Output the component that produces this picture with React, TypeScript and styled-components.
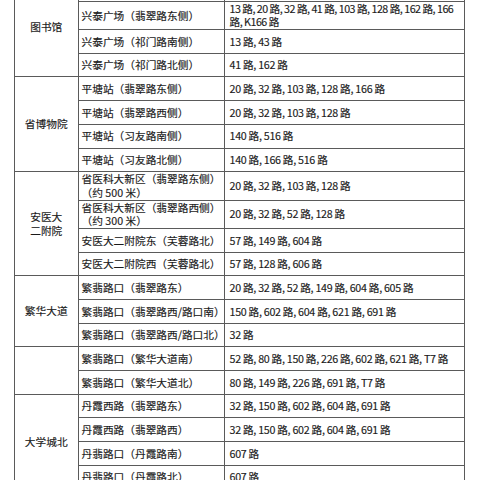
import React from 'react'
import styled, { createGlobalStyle } from 'styled-components'

const GlobalStyle = createGlobalStyle`
  body {
    margin: 0;
    background: #ffffff;
  }
`

const Page = styled.div`
  width: 480px;
  height: 480px;
  overflow: hidden;
  background: #ffffff;
`

const Sheet = styled.div`
  padding-left: 14px;
  margin-top: -23px;
`

const Table = styled.table`
  border-collapse: collapse;
  table-layout: fixed;
  width: 450px;
  font-family: "Noto Sans CJK SC", "Noto Sans", sans-serif;
  font-size: 10.7px;
  color: #1a1a1a;
  -webkit-text-stroke: 0.15px #1a1a1a;
`

const Cell = styled.td<{ $tall?: boolean }>`
  border: 1px solid #5a5a5a;
  height: ${p => (p.$tall ? '27.4px' : '22.7px')};
  padding: 0 0 0 3px;
  line-height: 13.6px;
  white-space: nowrap;
  overflow: hidden;
  vertical-align: middle;
`

const GroupCell = styled.td`
  border: 1px solid #5a5a5a;
  text-align: center;
  vertical-align: middle;
  line-height: 14px;
  padding: 0;
`

const RouteCell = styled(Cell)<{ $tight?: boolean }>`
  padding-left: 5px;
  letter-spacing: ${p => (p.$tight ? '-0.5px' : '-0.28px')};
`

interface Stop {
  name: string[]
  routes: string[]
  tight?: boolean
}

interface Group {
  label: string[]
  stops: Stop[]
}

// the first stop of 图书馆 sits above the visible area
const groups: Group[] = [
  {
    label: ['图书馆'],
    stops: [
      { name: [], routes: [] },
      {
        name: ['兴泰广场（翡翠路东侧）'],
        routes: ['13 路, 20 路, 32 路, 41 路, 103 路, 128 路, 162 路, 166', '路, K166 路'],
        tight: true,
      },
      { name: ['兴泰广场（祁门路南侧）'], routes: ['13 路, 43 路'] },
      { name: ['兴泰广场（祁门路北侧）'], routes: ['41 路, 162 路'] },
    ],
  },
  {
    label: ['省博物院'],
    stops: [
      { name: ['平塘站（翡翠路东侧）'], routes: ['20 路, 32 路, 103 路, 128 路, 166 路'] },
      { name: ['平塘站（翡翠路西侧）'], routes: ['20 路, 32 路, 103 路, 128 路'] },
      { name: ['平塘站（习友路南侧）'], routes: ['140 路, 516 路'] },
      { name: ['平塘站（习友路北侧）'], routes: ['140 路, 166 路, 516 路'] },
    ],
  },
  {
    label: ['安医大', '二附院'],
    stops: [
      { name: ['省医科大新区（翡翠路东侧）', '（约 500 米）'], routes: ['20 路, 32 路, 103 路, 128 路'] },
      { name: ['省医科大新区（翡翠路西侧）', '（约 300 米）'], routes: ['20 路, 32 路, 52 路, 128 路'] },
      { name: ['安医大二附院东（芙蓉路北）'], routes: ['57 路, 149 路, 604 路'] },
      { name: ['安医大二附院西（芙蓉路北）'], routes: ['57 路, 128 路, 606 路'] },
    ],
  },
  {
    label: ['繁华大道'],
    stops: [
      { name: ['繁翡路口（翡翠路东）'], routes: ['20 路, 32 路, 52 路, 149 路, 604 路, 605 路'] },
      { name: ['繁翡路口（翡翠路西/路口南）'], routes: ['150 路, 602 路, 604 路, 621 路, 691 路'] },
      { name: ['繁翡路口（翡翠路西/路口北）'], routes: ['32 路'] },
    ],
  },
  {
    label: [],
    stops: [
      { name: ['繁翡路口（繁华大道南）'], routes: ['52 路, 80 路, 150 路, 226 路, 602 路, 621 路, T7 路'] },
      { name: ['繁翡路口（繁华大道北）'], routes: ['80 路, 149 路, 226 路, 691 路, T7 路'] },
    ],
  },
  {
    label: ['大学城北'],
    stops: [
      { name: ['丹霞西路（翡翠路东）'], routes: ['32 路, 150 路, 602 路, 604 路, 691 路'] },
      { name: ['丹霞西路（翡翠路西）'], routes: ['32 路, 150 路, 602 路, 604 路, 691 路'] },
      { name: ['丹翡路口（丹霞路南）'], routes: ['607 路'] },
      { name: ['丹翡路口（丹霞路北）'], routes: ['607 路'] },
    ],
  },
]

const Lines = ({ lines }: { lines: string[] }) => (
  <>
    {lines.map((line, i) => (
      <React.Fragment key={i}>
        {i > 0 && <br />}
        {line}
      </React.Fragment>
    ))}
  </>
)

const App = () => {
  return (
    <Page>
      <GlobalStyle />
      <Sheet>
        <Table>
          <colgroup>
            <col style={{ width: 63.5 }} />
            <col style={{ width: 146 }} />
            <col style={{ width: 240.5 }} />
          </colgroup>
          <tbody>
            {groups.map((group, g) =>
              group.stops.map((stop, i) => {
                const tall = stop.name.length > 1 || stop.routes.length > 1
                return (
                  <tr key={`${g}-${i}`}>
                    {i === 0 && (
                      <GroupCell rowSpan={group.stops.length}>
                        <Lines lines={group.label} />
                      </GroupCell>
                    )}
                    <Cell $tall={tall}>
                      <Lines lines={stop.name} />
                    </Cell>
                    <RouteCell $tall={tall} $tight={stop.tight}>
                      <Lines lines={stop.routes} />
                    </RouteCell>
                  </tr>
                )
              })
            )}
          </tbody>
        </Table>
      </Sheet>
    </Page>
  )
}

export default App
